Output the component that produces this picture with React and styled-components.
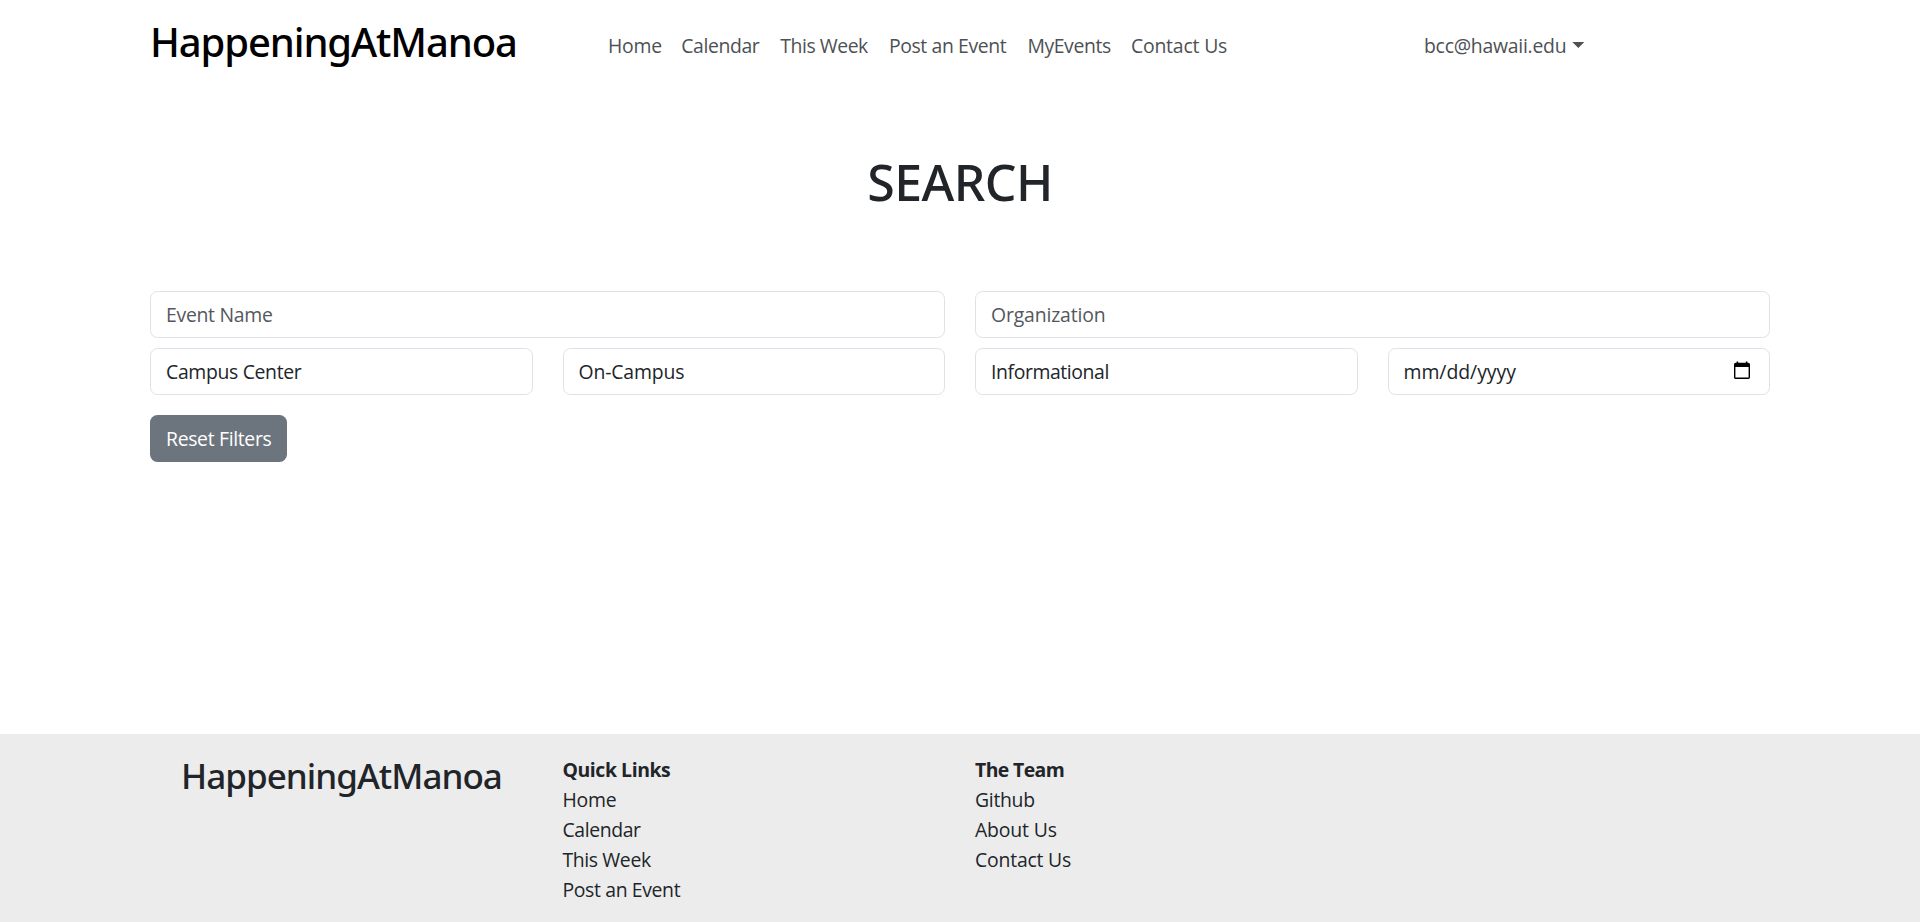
import React from 'react';
import styled, { createGlobalStyle } from 'styled-components';

const GlobalStyle = createGlobalStyle`
  *, *::before, *::after { box-sizing: border-box; }
  html, body { margin: 0; }
  body {
    background: #fff;
    color: #212529;
    font: 400 19.4px/30px "Open Sans", "Noto Sans", sans-serif;
  }
`;

const Page = styled.div`
  display: flex;
  flex-direction: column;
  height: 922px;
  overflow: hidden;
`;

const Label = styled.span`
  display: block;
  white-space: nowrap;
  letter-spacing: ${p => p.$track || 0}px;
`;

const Navbar = styled.header`
  display: flex;
  align-items: flex-start;
  height: 92px;
  padding: 0 150px;
`;

const Brand = styled.a`
  width: 458px;
  padding-top: 18px;
  color: #000;
  font: 500 40px/48px "Noto Sans", sans-serif;
  letter-spacing: -1.12px;
`;

const NavLinks = styled.nav`
  display: flex;
  gap: 20px;
  width: 816px;
  padding-top: 31px;
`;

const NavLink = styled.a`
  width: ${p => p.$w}px;
  color: #4d5154;
`;

const UserMenu = styled.a`
  display: flex;
  gap: 6px;
  padding-top: 31px;
  color: #4d5154;
`;

const Caret = styled.span`
  width: 12px;
  height: 6px;
  margin-top: 11px;
  background: currentColor;
  clip-path: polygon(0 0, 100% 0, 50% 100%);
`;

const Main = styled.main`
  flex: 1;
  padding: 60px 150px 0;
`;

const Title = styled.h1`
  margin: 0;
  text-align: center;
  font: 500 50px/60px "Noto Sans", sans-serif;
  letter-spacing: -0.55px;
`;

const Filters = styled.form`
  display: grid;
  grid-template-columns: repeat(4, 1fr);
  gap: 10px 30px;
  margin-top: 79px;
`;

const Field = styled.div`
  display: flex;
  justify-content: space-between;
  grid-column: span ${p => p.$span || 1};
  height: 47px;
  padding: 8px 15px 7px;
  border: 1px solid #dee2e6;
  border-radius: 7.5px;
  color: ${p => (p.$placeholder ? '#54585c' : '#212529')};
`;

const CalendarIcon = styled.svg`
  width: 16px;
  height: 18px;
  margin: 4px 4px 0 0;
`;

const ResetButton = styled.button`
  display: block;
  width: 137px;
  height: 47px;
  margin-top: 20px;
  padding: 0 15px 0 16px;
  border: 0;
  border-radius: 7.5px;
  background: #6c757d;
  color: #fff;
  font: inherit;
  text-align: left;
`;

const Footer = styled.footer`
  display: grid;
  grid-template-columns: repeat(4, 1fr);
  gap: 30px;
  height: 188px;
  padding: 21px 150px 0;
  background: #ececec;
`;

const FooterBrand = styled.div`
  padding-left: 31px;
  font: 500 35px/42px "Noto Sans", sans-serif;
  letter-spacing: -0.98px;
`;

const FooterLink = styled.a`
  display: block;
  color: #212529;
`;

const FooterHeading = styled(FooterLink)`
  font-weight: 700;
`;

const navItems = [
  ['Home', -0.24, 53.3],
  ['Calendar', -0.4, 79],
  ['This Week', -0.45, 88.6],
  ['Post an Event', -0.38, 118.5],
  ['MyEvents', -0.4, 83.5],
  ['Contact Us', -0.18, 97],
];

const filters = [
  { text: 'Event Name', track: -0.28, span: 2, placeholder: true },
  { text: 'Organization', track: -0.16, span: 2, placeholder: true },
  { text: 'Campus Center', track: -0.33 },
  { text: 'On-Campus', track: -0.14 },
  { text: 'Informational', track: -0.4 },
  { text: 'mm/dd/yyyy', track: -0.03, icon: true },
];

const footerColumns = [
  {
    heading: ['Quick Links', -0.42],
    links: [['Home', -0.24], ['Calendar', -0.4], ['This Week', -0.38], ['Post an Event', -0.36]],
  },
  {
    heading: ['The Team', -0.6],
    links: [['Github', -0.3], ['About Us', -0.15], ['Contact Us', -0.2]],
  },
];

export default function App() {
  return (
    <Page>
      <GlobalStyle />
      <Navbar>
        <Brand>HappeningAtManoa</Brand>
        <NavLinks>
          {navItems.map(([text, track, width]) => (
            <NavLink key={text} $w={width}><Label $track={track}>{text}</Label></NavLink>
          ))}
        </NavLinks>
        <UserMenu>
          <Label $track={-0.25}>bcc@hawaii.edu</Label>
          <Caret />
        </UserMenu>
      </Navbar>
      <Main>
        <Title>SEARCH</Title>
        <Filters>
          {filters.map(f => (
            <Field key={f.text} $span={f.span} $placeholder={f.placeholder}>
              <Label $track={f.track}>{f.text}</Label>
              {f.icon && (
                <CalendarIcon viewBox="0 0 16 18" fill="none">
                  <path d="M1.7 2.4h12.6a1 1 0 0 1 1 1v12.9a1 1 0 0 1-1 1H1.7a1 1 0 0 1-1-1V3.4a1 1 0 0 1 1-1Z" stroke="#000" strokeWidth="1.4" />
                  <path d="M1 2h14v4H1ZM2.6 0.4h1.6v2H2.6ZM11.8 0.4h1.6v2h-1.6Z" fill="#000" />
                </CalendarIcon>
              )}
            </Field>
          ))}
        </Filters>
        <ResetButton type="button"><Label $track={-0.33}>Reset Filters</Label></ResetButton>
      </Main>
      <Footer>
        <FooterBrand>HappeningAtManoa</FooterBrand>
        {footerColumns.map(({ heading, links }) => (
          <div key={heading[0]}>
            <FooterHeading><Label $track={heading[1]}>{heading[0]}</Label></FooterHeading>
            {links.map(([text, track]) => (
              <FooterLink key={text}><Label $track={track}>{text}</Label></FooterLink>
            ))}
          </div>
        ))}
      </Footer>
    </Page>
  );
}
